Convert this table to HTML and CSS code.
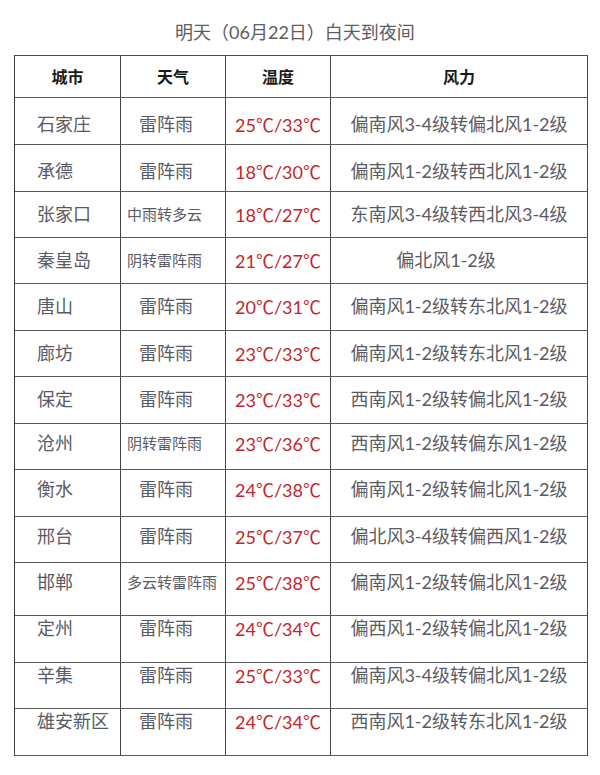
FILE: index.html
```html
<!DOCTYPE html>
<html lang="zh-CN">
<head>
<meta charset="utf-8">
<title>明天（06月22日）白天到夜间</title>
<link rel="stylesheet" href="styles.css">
</head>
<body>
<div class="page">
  <h1 class="title">明天（06月22日）白天到夜间</h1>
  <div class="table">
    <div class="row head">
      <div class="cell">城市</div>
      <div class="cell">天气</div>
      <div class="cell">温度</div>
      <div class="cell">风力</div>
    </div>
    <div class="row a">
      <div class="cell city">石家庄</div>
      <div class="cell wx">雷阵雨</div>
      <div class="cell temp">25<span class="deg">℃</span>/33<span class="deg">℃</span></div>
      <div class="cell wind">偏南风3-4级转偏北风1-2级</div>
    </div>
    <div class="row a">
      <div class="cell city">承德</div>
      <div class="cell wx">雷阵雨</div>
      <div class="cell temp">18<span class="deg">℃</span>/30<span class="deg">℃</span></div>
      <div class="cell wind">偏南风1-2级转西北风1-2级</div>
    </div>
    <div class="row b">
      <div class="cell city">张家口</div>
      <div class="cell wx small">中雨转多云</div>
      <div class="cell temp">18<span class="deg">℃</span>/27<span class="deg">℃</span></div>
      <div class="cell wind">东南风3-4级转西北风3-4级</div>
    </div>
    <div class="row b">
      <div class="cell city">秦皇岛</div>
      <div class="cell wx small">阴转雷阵雨</div>
      <div class="cell temp">21<span class="deg">℃</span>/27<span class="deg">℃</span></div>
      <div class="cell wind short">偏北风1-2级</div>
    </div>
    <div class="row b">
      <div class="cell city">唐山</div>
      <div class="cell wx">雷阵雨</div>
      <div class="cell temp">20<span class="deg">℃</span>/31<span class="deg">℃</span></div>
      <div class="cell wind">偏南风1-2级转东北风1-2级</div>
    </div>
    <div class="row b">
      <div class="cell city">廊坊</div>
      <div class="cell wx">雷阵雨</div>
      <div class="cell temp">23<span class="deg">℃</span>/33<span class="deg">℃</span></div>
      <div class="cell wind">偏南风1-2级转东北风1-2级</div>
    </div>
    <div class="row b">
      <div class="cell city">保定</div>
      <div class="cell wx">雷阵雨</div>
      <div class="cell temp">23<span class="deg">℃</span>/33<span class="deg">℃</span></div>
      <div class="cell wind">西南风1-2级转偏北风1-2级</div>
    </div>
    <div class="row c">
      <div class="cell city">沧州</div>
      <div class="cell wx small">阴转雷阵雨</div>
      <div class="cell temp">23<span class="deg">℃</span>/36<span class="deg">℃</span></div>
      <div class="cell wind">西南风1-2级转偏东风1-2级</div>
    </div>
    <div class="row c">
      <div class="cell city">衡水</div>
      <div class="cell wx">雷阵雨</div>
      <div class="cell temp">24<span class="deg">℃</span>/38<span class="deg">℃</span></div>
      <div class="cell wind">偏南风1-2级转偏北风1-2级</div>
    </div>
    <div class="row c">
      <div class="cell city">邢台</div>
      <div class="cell wx">雷阵雨</div>
      <div class="cell temp">25<span class="deg">℃</span>/37<span class="deg">℃</span></div>
      <div class="cell wind">偏北风3-4级转偏西风1-2级</div>
    </div>
    <div class="row c">
      <div class="cell city">邯郸</div>
      <div class="cell wx small">多云转雷阵雨</div>
      <div class="cell temp">25<span class="deg">℃</span>/38<span class="deg">℃</span></div>
      <div class="cell wind">偏南风1-2级转偏北风1-2级</div>
    </div>
    <div class="row d">
      <div class="cell city">定州</div>
      <div class="cell wx">雷阵雨</div>
      <div class="cell temp">24<span class="deg">℃</span>/34<span class="deg">℃</span></div>
      <div class="cell wind">偏西风1-2级转偏北风1-2级</div>
    </div>
    <div class="row d">
      <div class="cell city">辛集</div>
      <div class="cell wx">雷阵雨</div>
      <div class="cell temp">25<span class="deg">℃</span>/33<span class="deg">℃</span></div>
      <div class="cell wind">偏南风3-4级转偏北风1-2级</div>
    </div>
    <div class="row d">
      <div class="cell city">雄安新区</div>
      <div class="cell wx">雷阵雨</div>
      <div class="cell temp">24<span class="deg">℃</span>/34<span class="deg">℃</span></div>
      <div class="cell wind">西南风1-2级转东北风1-2级</div>
    </div>
  </div>
</div>
</body>
</html>
```
FILE: styles.css
```css
* {
  box-sizing: border-box;
}

body {
  margin: 0;
  background: #ffffff;
  font-family: "Lato", "Noto Sans CJK SC", sans-serif;
  color: #5a5a64;
}

.page {
  width: 600px;
}

.title {
  margin: 0;
  height: 55px;
  padding: 21px 10px 0 0;
  font-size: 18px;
  line-height: 22px;
  font-weight: normal;
  text-align: center;
  color: #5c5c64;
}

.table {
  display: grid;
  grid-template-columns: 106px 105px 105px 257px;
  grid-template-rows: 42px 47px 47px 46px 46px 47px 46px 47px 46px 47px 46px 53px 47px 46px 47px;
  width: 574px;
  margin-left: 14px;
  border-top: 1px solid #4a4a4a;
  border-left: 1px solid #3c3c3c;
}

.row {
  display: contents;
}

.cell {
  border-right: 1px solid #444;
  border-bottom: 1px solid #5a5a5a;
  font-size: 18px;
  line-height: 24px;
  white-space: nowrap;
}

.head .cell {
  display: flex;
  align-items: center;
  justify-content: center;
  padding-bottom: 2px;
  font-family: "Noto Sans CJK SC", sans-serif;
  font-size: 16px;
  font-weight: bold;
  color: #1a1a1a;
}

.row.a .cell { padding-top: 14px; }
.row.b .cell { padding-top: 10px; }
.row.c .cell { padding-top: 7px; }
.row.d .cell { padding-top: 0; }

.city {
  padding-left: 22px;
}

.wx {
  padding-left: 18px;
}

.wx.small {
  padding-left: 6px;
  font-size: 15px;
}

.temp {
  text-align: center;
  color: #c4252c;
}

.deg {
  font-family: "Noto Sans CJK SC", sans-serif;
}

.wind {
  text-align: center;
}

.wind.short {
  padding-right: 26px;
}
```
